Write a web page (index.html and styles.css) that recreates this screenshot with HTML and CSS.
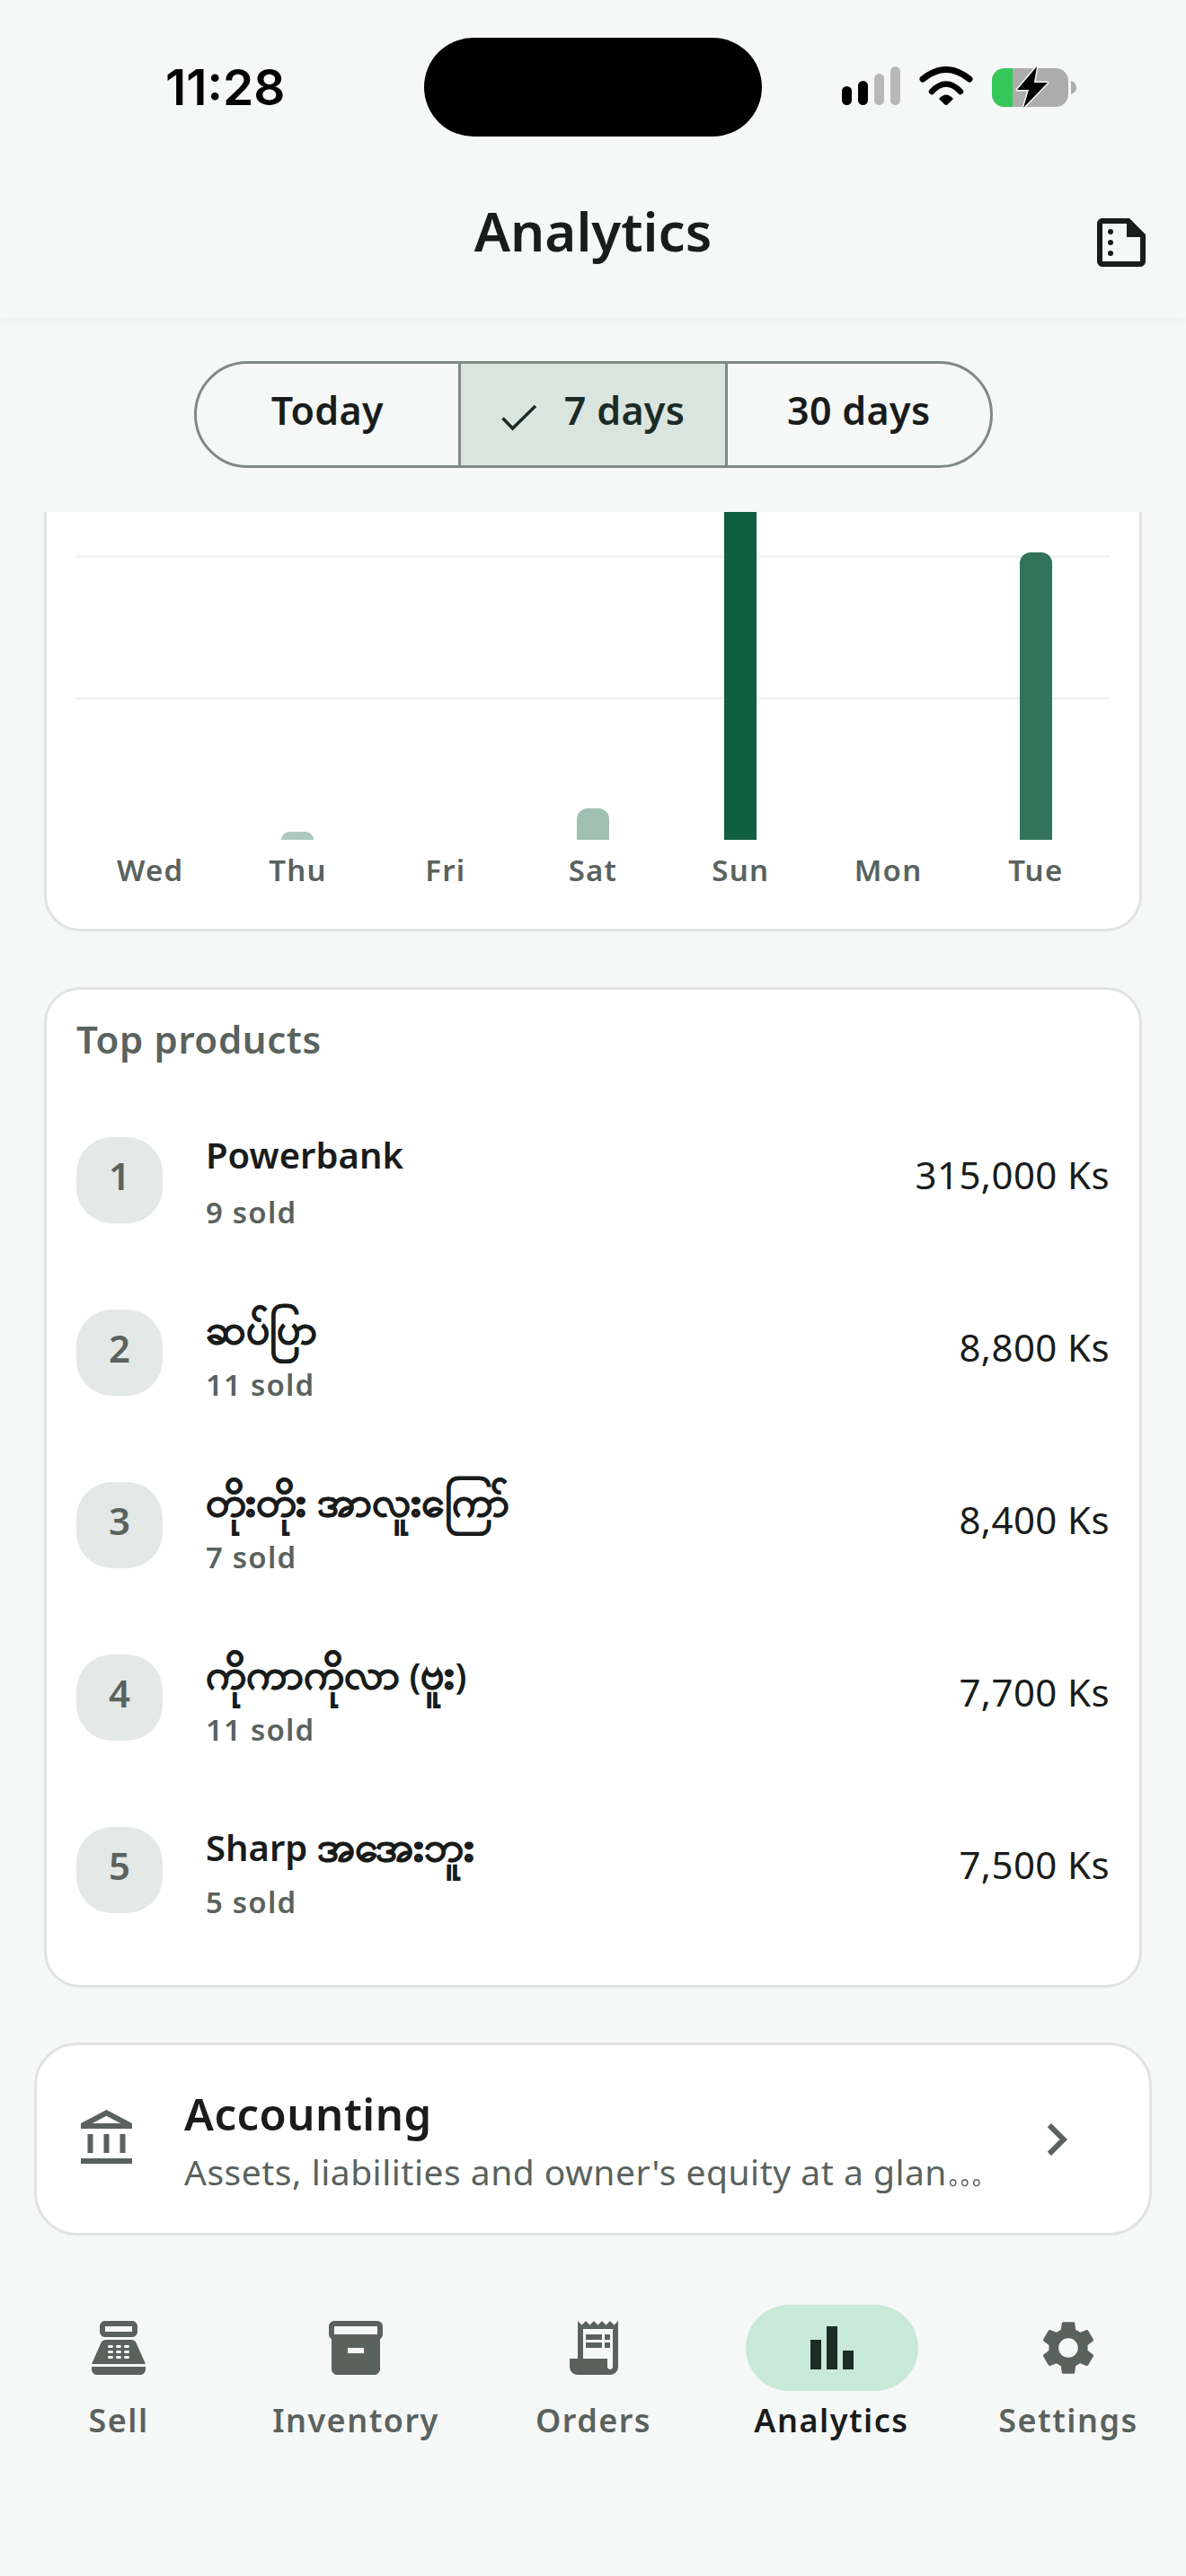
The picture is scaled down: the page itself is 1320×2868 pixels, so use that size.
FILE: index.html
```html
<!DOCTYPE html>
<html lang="en">
<head>
    <meta charset="UTF-8">
    <meta name="viewport" content="width=device-width, initial-scale=1.0">
    <title>Analytics</title>
    <link rel="stylesheet" href="styles.css">
</head>
<body>
    <div class="phone">
        <div class="status-bar">
            <div class="time">11:28</div>
            <div class="island"></div>
            <div class="status-icons">
                <svg class="signal" width="65" height="43" viewBox="0 0 65 43">
                    <rect x="0" y="22" width="11" height="21" rx="5.5" fill="#000"/>
                    <rect x="18" y="16" width="11" height="27" rx="5.5" fill="#000"/>
                    <rect x="36" y="8" width="11" height="35" rx="5.5" fill="#b8b8b8"/>
                    <rect x="54" y="0" width="11" height="43" rx="5.5" fill="#b8b8b8"/>
                </svg>
                <svg class="wifi" width="60" height="43" viewBox="0 0 60 43">
                    <path d="M4 14Q30 -7 56 14" fill="none" stroke="#000" stroke-width="7" stroke-linecap="round"/>
                    <path d="M14 28Q30 11 46 28" fill="none" stroke="#000" stroke-width="6.5" stroke-linecap="round"/>
                    <path d="M22 36Q30 27 38 36L32 42Q30 44 28 42Z" fill="#000"/>
                </svg>
                <svg class="battery" width="94" height="46" viewBox="0 0 94 46">
                    <rect x="0" y="2" width="85" height="43" rx="14" fill="#adadad"/>
                    <path d="M14 2H23V45H14A14 14 0 0 1 0 31V16A14 14 0 0 1 14 2Z" fill="#34c759"/>
                    <path d="M88 16Q94 18 94 23.500Q94 29 88 31Z" fill="#adadad"/>
                    <path d="M50 0L28 26H41L35 46L62 18H47Z" fill="#000" stroke="#f6f8f7" stroke-width="3" paint-order="stroke" stroke-linejoin="round"/>
                </svg>
            </div>
        </div>

        <header class="top-bar">
            <h1>Analytics</h1>
            <svg class="report-icon" width="72" height="72" viewBox="0 0 24 24">
                <path d="M15 3H5C3.900 3 3.010 3.900 3.010 5L3 19c0 1.100.89 2 1.990 2H19c1.100 0 2-.9 2-2V9L15 3zM5 19V5h9v5h5v9H5z"/>
                <circle cx="8" cy="8" r="1"/>
                <circle cx="8" cy="12" r="1"/>
                <circle cx="8" cy="16" r="1"/>
            </svg>
        </header>

        <div class="range-wrap">
            <div class="range">
                <div class="range-item">Today</div>
                <div class="range-item selected">
                    <svg class="check" width="40" height="30" viewBox="0 0 40 30"><path d="M1.500 15.500L12.500 27L38 2" fill="none" stroke="#1b2b25" stroke-width="3.500"/></svg>
                    <span>7 days</span>
                </div>
                <div class="range-item">30 days</div>
            </div>
        </div>

        <main class="scroll">
            <section class="card chart-card">
                <div class="plot">
                    <div class="grid-line line-a"></div>
                    <div class="grid-line line-b"></div>
                    <div class="bar-col"></div>
                    <div class="bar-col"><div class="bar" style="height:9px;background:#aec8be"></div></div>
                    <div class="bar-col"></div>
                    <div class="bar-col"><div class="bar" style="height:35px;background:#a0bfb3"></div></div>
                    <div class="bar-col"><div class="bar" style="height:425px;background:#0f5f40"></div></div>
                    <div class="bar-col"></div>
                    <div class="bar-col"><div class="bar" style="height:320px;background:#32745b"></div></div>
                </div>
                <div class="days">
                    <div>Wed</div><div>Thu</div><div>Fri</div><div>Sat</div><div>Sun</div><div>Mon</div><div>Tue</div>
                </div>
            </section>

            <section class="card products-card">
                <h2>Top products</h2>
                <div class="product-list">
                    <div class="product">
                        <div class="rank">1</div>
                        <div class="product-text">
                            <div class="product-name">Powerbank</div>
                            <div class="product-sold">9 sold</div>
                        </div>
                        <div class="product-price">315,000 Ks</div>
                    </div>
                    <div class="product">
                        <div class="rank">2</div>
                        <div class="product-text">
                            <div class="product-name"><span class="mm">ဆပ်ပြာ</span></div>
                            <div class="product-sold">11 sold</div>
                        </div>
                        <div class="product-price">8,800 Ks</div>
                    </div>
                    <div class="product">
                        <div class="rank">3</div>
                        <div class="product-text">
                            <div class="product-name"><span class="mm">တိုးတိုး အာလူးကြော်</span></div>
                            <div class="product-sold">7 sold</div>
                        </div>
                        <div class="product-price">8,400 Ks</div>
                    </div>
                    <div class="product">
                        <div class="rank">4</div>
                        <div class="product-text">
                            <div class="product-name"><span class="mm">ကိုကာကိုလာ</span> (<span class="mm">ဗူး</span>)</div>
                            <div class="product-sold">11 sold</div>
                        </div>
                        <div class="product-price">7,700 Ks</div>
                    </div>
                    <div class="product">
                        <div class="rank">5</div>
                        <div class="product-text">
                            <div class="product-name">Sharp <span class="mm">အအေးဘူး</span></div>
                            <div class="product-sold">5 sold</div>
                        </div>
                        <div class="product-price">7,500 Ks</div>
                    </div>
                </div>
            </section>

            <section class="card accounting-card">
                <svg class="bank-icon" width="72" height="72" viewBox="0 0 24 24">
                    <path d="M6.500 10h-2v7h2v-7zm6 0h-2v7h2v-7zm8.500 9H2v2h19v-2zm-2.500-9h-2v7h2v-7zm-7-6.740L16.710 6H6.290l5.210-2.740m0-2.260L2 6v2h19V6l-9.500-5z"/>
                </svg>
                <div class="accounting-text">
                    <div class="accounting-title">Accounting</div>
                    <div class="accounting-sub">Assets, liabilities and owner's equity at a glan<span class="ellipsis">…</span></div>
                </div>
                <svg class="chevron" width="72" height="72" viewBox="0 0 24 24">
                    <path d="M10 6L8.590 7.410 13.170 12l-4.580 4.590L10 18l6-6z"/>
                </svg>
            </section>
        </main>

        <nav class="bottom-nav">
            <div class="nav-item">
                <div class="nav-icon">
                    <svg width="72" height="72" viewBox="0 0 24 24"><path d="M17 2H7c-1.100 0-2 .9-2 2v2c0 1.100.9 2 2 2h10c1.100 0 2-.9 2-2V4c0-1.100-.9-2-2-2zm0 4H7V4h10v2zm3 16H4c-1.100 0-2-.9-2-2v-1h20v1c0 1.100-.9 2-2 2zm-1.470-11.810C18.210 9.470 17.490 9 16.700 9H7.300c-.79 0-1.510.47-1.830 1.190L2 18h20l-3.470-7.810zM9.500 16h-1c-.28 0-.5-.22-.5-.5s.22-.5.5-.5h1c.28 0 .5.22.5.500s-.22.500-.5.500zm0-2h-1c-.28 0-.5-.22-.5-.5s.22-.5.5-.5h1c.28 0 .5.22.5.500s-.22.500-.5.500zm0-2h-1c-.28 0-.5-.22-.5-.5s.22-.5.5-.5h1c.28 0 .5.22.5.500s-.22.500-.5.500zm3 4h-1c-.28 0-.5-.22-.5-.5s.22-.5.5-.5h1c.28 0 .5.22.5.500s-.22.500-.5.500zm0-2h-1c-.28 0-.5-.22-.5-.5s.22-.5.5-.5h1c.28 0 .5.22.5.500s-.22.500-.5.500zm0-2h-1c-.28 0-.5-.22-.5-.5s.22-.5.5-.5h1c.28 0 .5.22.5.500s-.22.500-.5.500zm3 4h-1c-.28 0-.5-.22-.5-.5s.22-.5.5-.5h1c.28 0 .5.22.5.500s-.22.500-.5.500zm0-2h-1c-.28 0-.5-.22-.5-.5s.22-.5.5-.5h1c.28 0 .5.22.5.500s-.22.500-.5.500zm0-2h-1c-.28 0-.5-.22-.5-.5s.22-.5.5-.5h1c.28 0 .5.22.5.500s-.22.500-.5.500z" fill-rule="evenodd"/></svg>
                </div>
                <div class="nav-label">Sell</div>
            </div>
            <div class="nav-item">
                <div class="nav-icon">
                    <svg width="72" height="72" viewBox="0 0 24 24"><path d="M20 2H4c-1 0-2 .9-2 2v3.010c0 .72.43 1.340 1 1.690V20c0 1.100 1.100 2 2 2h14c.9 0 2-.9 2-2V8.700c.57-.35 1-.97 1-1.690V4c0-1.100-1-2-2-2zm-5 12H9v-2h6v2zm5-7H4V4l16-.02V7z"/></svg>
                </div>
                <div class="nav-label">Inventory</div>
            </div>
            <div class="nav-item">
                <div class="nav-icon">
                    <svg width="72" height="72" viewBox="0 0 24 24"><path d="M19.500 3.500L18 2l-1.500 1.500L15 2l-1.500 1.500L12 2l-1.500 1.500L9 2 7.500 3.500 6 2v14H3v3c0 1.660 1.340 3 3 3h12c1.660 0 3-1.340 3-3V2l-1.500 1.500zM19 19c0 .55-.45 1-1 1s-1-.45-1-1v-3H8V5h11v14z"/><path d="M9 7h6v2H9zM16 7h2v2h-2zM9 10h6v2H9zM16 10h2v2h-2z"/></svg>
                </div>
                <div class="nav-label">Orders</div>
            </div>
            <div class="nav-item active">
                <div class="nav-icon">
                    <svg width="72" height="72" viewBox="0 0 24 24"><path d="M4 9h4v11H4zM16 13h4v7h-4zM10 4h4v16h-4z"/></svg>
                </div>
                <div class="nav-label">Analytics</div>
            </div>
            <div class="nav-item">
                <div class="nav-icon">
                    <svg width="72" height="72" viewBox="0 0 24 24"><path d="M19.140 12.940c.04-.3.06-.61.06-.94 0-.32-.02-.64-.07-.94l2.030-1.580c.18-.14.23-.41.12-.61l-1.920-3.320c-.12-.22-.37-.29-.59-.22l-2.390.96c-.5-.38-1.030-.7-1.620-.94l-.36-2.540c-.04-.24-.24-.41-.48-.41h-3.840c-.24 0-.43.17-.47.41l-.36 2.540c-.59.24-1.130.57-1.620.94l-2.390-.96c-.22-.08-.47 0-.59.22L2.740 8.870c-.12.21-.08.47.12.61l2.030 1.580c-.05.3-.09.63-.09.94s.02.64.07.94l-2.030 1.580c-.18.14-.23.41-.12.61l1.920 3.320c.12.22.37.29.59.22l2.390-.96c.5.38 1.030.7 1.620.94l.36 2.540c.05.24.24.41.48.41h3.840c.24 0 .44-.17.47-.41l.36-2.540c.59-.24 1.130-.56 1.620-.94l2.390.96c.22.08.47 0 .59-.22l1.920-3.320c.12-.22.07-.47-.12-.61l-2.010-1.580zM12 15.600c-1.980 0-3.600-1.620-3.600-3.600s1.620-3.600 3.600-3.600 3.600 1.620 3.600 3.600-1.620 3.600-3.600 3.600z"/></svg>
                </div>
                <div class="nav-label">Settings</div>
            </div>
        </nav>
    </div>
</body>
</html>
```

FILE: styles.css
```css
* {
    box-sizing: border-box;
}
body {
    margin: 0;
    background: #f6f8f7;
    font-family: "Noto Sans", sans-serif;
    color: #191c1b;
}
.phone {
    width: 1320px;
    height: 2868px;
    display: flex;
    flex-direction: column;
    overflow: hidden;
}
.status-bar {
    height: 195px;
    padding: 42px 121px 0 184px;
    display: flex;
    align-items: flex-start;
}
.time {
    width: 288px;
    margin-top: 25px;
    font-family: Inter, sans-serif;
    font-size: 55px;
    font-weight: 600;
    line-height: 60px;
    color: #000;
}
.island {
    width: 376px;
    height: 110px;
    border-radius: 55px;
    background: #000;
}
.status-icons {
    margin-left: 89px;
    margin-top: 32px;
    display: flex;
    align-items: flex-start;
    gap: 21px;
}
.top-bar {
    height: 159px;
    padding: 39px 36px 0 0;
    display: flex;
    justify-content: flex-end;
    position: relative;
    box-shadow: 0 4px 10px rgba(0, 0, 0, 0.03);
}
.top-bar h1 {
    position: absolute;
    left: 0;
    right: 0;
    top: 27px;
    margin: 0;
    text-align: center;
    font-size: 60px;
    font-weight: 600;
    line-height: 70px;
}
.report-icon {
    fill: #191c1b;
}
.range-wrap {
    height: 216px;
    padding-top: 48px;
    display: flex;
    justify-content: center;
}
.range {
    width: 889px;
    height: 119px;
    display: flex;
    border: 3px solid #7f8a85;
    border-radius: 60px;
    overflow: hidden;
}
.range-item {
    flex: 1;
    display: flex;
    align-items: center;
    justify-content: center;
    gap: 30px;
    padding-bottom: 10px;
    font-size: 43px;
    font-weight: 600;
    letter-spacing: 0.3px;
    color: #191c1b;
}
.range-item.selected {
    flex: 0 0 300px;
    background: #dbe5e0;
    border-left: 3px solid #7f8a85;
    border-right: 3px solid #7f8a85;
    color: #1b2b25;
}
.check {
    flex-shrink: 0;
    margin-top: 16px;
}
.scroll {
    flex: 1;
    min-height: 0;
    padding: 0 49px;
    overflow: hidden;
}
.card {
    background: #fff;
    border: 3px solid #e0e3e1;
    border-radius: 40px;
}
.chart-card {
    height: 530px;
    margin-top: -63px;
    padding: 0 33px;
}
.plot {
    height: 425px;
    display: grid;
    grid-template-columns: repeat(7, 1fr);
    align-items: end;
    justify-items: center;
    position: relative;
}
.grid-line {
    position: absolute;
    left: 0;
    right: 0;
    height: 3px;
    background: #f1f3f2;
}
.line-a {
    top: 108px;
}
.line-b {
    top: 266px;
}
.bar-col {
    position: relative;
    z-index: 1;
}
.bar {
    width: 36px;
    border-radius: 12px 12px 0 0;
}
.days {
    display: grid;
    grid-template-columns: repeat(7, 1fr);
    margin-top: 14px;
    font-size: 33px;
    font-weight: 600;
    letter-spacing: 1.2px;
    line-height: 40px;
    text-align: center;
    color: #5a625e;
}
.products-card {
    height: 1114px;
    margin-top: 62px;
    padding: 0 33px;
}
.products-card h2 {
    margin: 33px 0 0;
    font-size: 42px;
    font-weight: 600;
    letter-spacing: 0.6px;
    line-height: 44px;
    color: #5a625e;
}
.product-list {
    margin-top: 87px;
    display: flex;
    flex-direction: column;
    gap: 88px;
}
.product {
    height: 104px;
    display: flex;
    align-items: flex-start;
}
.rank {
    width: 96px;
    height: 96px;
    padding-bottom: 12px;
    border-radius: 40px;
    display: flex;
    align-items: center;
    justify-content: center;
    background: #e4e8e6;
    color: #5a625e;
    font-size: 42px;
    font-weight: 600;
}
.product-text {
    flex: 1;
    margin: -2px 0 0 48px;
}
.product-name {
    height: 44px;
    font-size: 40px;
    font-weight: 600;
    line-height: 44px;
    white-space: nowrap;
}
.mm {
    font-size: 46px;
    font-weight: 700;
    -webkit-text-stroke: 0.8px #191c1b;
}
.product-sold {
    margin-top: 24px;
    font-size: 33px;
    font-weight: 600;
    letter-spacing: 1.2px;
    line-height: 36px;
    color: #5a625e;
}
.product-price {
    margin-top: 20px;
    font-size: 42px;
    letter-spacing: 0.4px;
    line-height: 44px;
    color: #191c1b;
}
.accounting-card {
    height: 215px;
    margin: 61px -11px 0;
    padding: 0 67px 0 43px;
    display: flex;
    align-items: center;
    border-radius: 48px;
}
.bank-icon {
    fill: #5a625e;
    flex-shrink: 0;
}
.accounting-text {
    flex: 1;
    margin-left: 49px;
    padding-top: 6px;
}
.accounting-title {
    font-size: 49px;
    font-weight: 600;
    letter-spacing: 0.5px;
    line-height: 62px;
}
.accounting-sub {
    font-size: 39px;
    letter-spacing: 0.5px;
    line-height: 60px;
    color: #5a625e;
    white-space: nowrap;
}
.ellipsis {
    font-size: 50px;
    color: transparent;
    -webkit-text-stroke: 1.5px #5a625e;
}
.chevron {
    fill: #5a625e;
    flex-shrink: 0;
}
.bottom-nav {
    height: 302px;
    display: grid;
    grid-template-columns: 264px 264px 265px 265px 262px;
}
.nav-item {
    display: flex;
    flex-direction: column;
    align-items: center;
}
.nav-icon {
    width: 192px;
    height: 96px;
    border-radius: 48px;
    display: flex;
    align-items: center;
    justify-content: center;
    fill: #5a625e;
}
.nav-item.active .nav-icon {
    background: #c9e9d9;
    fill: #1b2b25;
}
.nav-label {
    margin-top: 11px;
    font-size: 36px;
    font-weight: 600;
    letter-spacing: 1.5px;
    line-height: 44px;
    color: #5a625e;
}
.nav-item.active .nav-label {
    color: #191c1b;
}
```
